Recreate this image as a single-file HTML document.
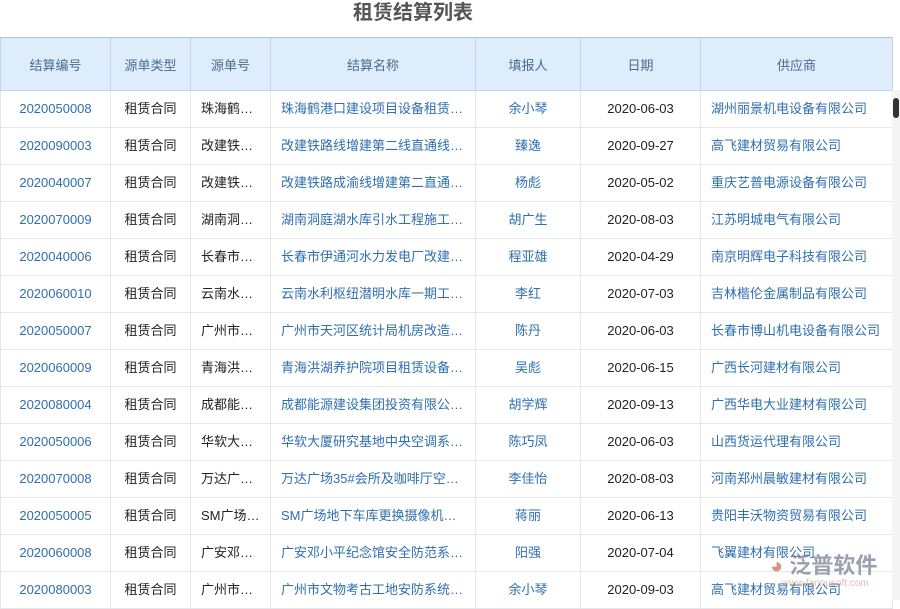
<!DOCTYPE html><html><head><meta charset="utf-8"><style>
body{margin:0;width:900px;height:600px;overflow:hidden;background:#fff;font-family:"Liberation Sans","Noto Sans CJK SC",sans-serif;position:relative}
h1{position:absolute;top:0;left:0;width:826px;margin:0;text-align:center;font-size:20px;line-height:26px;color:#555;font-weight:bold}
table{position:absolute;top:37px;left:0;border-collapse:collapse;table-layout:fixed;width:892px;font-size:13px}
th{background:#deedfb;color:#4a6c8c;font-weight:normal;height:52px;padding:0;border:1px solid #c4d6e6;border-top:1px solid #a9c4dc}
td{height:36px;padding:0;line-height:16px;border:1px solid #e4e8ec;text-align:center;color:#222;white-space:nowrap;overflow:hidden}
td.l{text-align:left;padding-left:10px}
.b{color:#2f6fae}
.sb{position:absolute;right:0;top:90px;width:8px;height:510px;background:#f4f4f4}
.sb div{width:6px;height:20px;margin:8px 1px;background:#333;border-radius:3px}
.logo{position:absolute;left:770px;top:548px;font-size:22px;font-weight:bold;color:rgba(120,130,150,.75)}
.url{position:absolute;left:782px;top:578px;font-size:10px;color:rgba(200,120,100,.5)}
</style></head><body>
<h1>租赁结算列表</h1>
<table>
<colgroup><col width="110"><col width="80"><col width="80"><col width="205"><col width="105"><col width="120"><col width="192"></colgroup>
<tr><th>结算编号</th><th>源单类型</th><th>源单号</th><th>结算名称</th><th>填报人</th><th>日期</th><th>供应商</th></tr>
<tr><td class="b">2020050008</td><td>租赁合同</td><td class="l">珠海鹤…</td><td class="l b">珠海鹤港口建设项目设备租赁…</td><td class="b">余小琴</td><td>2020-06-03</td><td class="l b">湖州丽景机电设备有限公司</td></tr>
<tr><td class="b">2020090003</td><td>租赁合同</td><td class="l">改建铁…</td><td class="l b">改建铁路线增建第二线直通线…</td><td class="b">臻逸</td><td>2020-09-27</td><td class="l b">高飞建材贸易有限公司</td></tr>
<tr><td class="b">2020040007</td><td>租赁合同</td><td class="l">改建铁…</td><td class="l b">改建铁路成渝线增建第二直通…</td><td class="b">杨彪</td><td>2020-05-02</td><td class="l b">重庆艺普电源设备有限公司</td></tr>
<tr><td class="b">2020070009</td><td>租赁合同</td><td class="l">湖南洞…</td><td class="l b">湖南洞庭湖水库引水工程施工…</td><td class="b">胡广生</td><td>2020-08-03</td><td class="l b">江苏明城电气有限公司</td></tr>
<tr><td class="b">2020040006</td><td>租赁合同</td><td class="l">长春市…</td><td class="l b">长春市伊通河水力发电厂改建…</td><td class="b">程亚雄</td><td>2020-04-29</td><td class="l b">南京明辉电子科技有限公司</td></tr>
<tr><td class="b">2020060010</td><td>租赁合同</td><td class="l">云南水…</td><td class="l b">云南水利枢纽潜明水库一期工…</td><td class="b">李红</td><td>2020-07-03</td><td class="l b">吉林楷伦金属制品有限公司</td></tr>
<tr><td class="b">2020050007</td><td>租赁合同</td><td class="l">广州市…</td><td class="l b">广州市天河区统计局机房改造…</td><td class="b">陈丹</td><td>2020-06-03</td><td class="l b">长春市博山机电设备有限公司</td></tr>
<tr><td class="b">2020060009</td><td>租赁合同</td><td class="l">青海洪…</td><td class="l b">青海洪湖养护院项目租赁设备…</td><td class="b">吴彪</td><td>2020-06-15</td><td class="l b">广西长河建材有限公司</td></tr>
<tr><td class="b">2020080004</td><td>租赁合同</td><td class="l">成都能…</td><td class="l b">成都能源建设集团投资有限公…</td><td class="b">胡学辉</td><td>2020-09-13</td><td class="l b">广西华电大业建材有限公司</td></tr>
<tr><td class="b">2020050006</td><td>租赁合同</td><td class="l">华软大…</td><td class="l b">华软大厦研究基地中央空调系…</td><td class="b">陈巧凤</td><td>2020-06-03</td><td class="l b">山西货运代理有限公司</td></tr>
<tr><td class="b">2020070008</td><td>租赁合同</td><td class="l">万达广…</td><td class="l b">万达广场35#会所及咖啡厅空…</td><td class="b">李佳怡</td><td>2020-08-03</td><td class="l b">河南郑州晨敏建材有限公司</td></tr>
<tr><td class="b">2020050005</td><td>租赁合同</td><td class="l">SM广场…</td><td class="l b">SM广场地下车库更换摄像机…</td><td class="b">蒋丽</td><td>2020-06-13</td><td class="l b">贵阳丰沃物资贸易有限公司</td></tr>
<tr><td class="b">2020060008</td><td>租赁合同</td><td class="l">广安邓…</td><td class="l b">广安邓小平纪念馆安全防范系…</td><td class="b">阳强</td><td>2020-07-04</td><td class="l b">飞翼建材有限公司</td></tr>
<tr><td class="b">2020080003</td><td>租赁合同</td><td class="l">广州市…</td><td class="l b">广州市文物考古工地安防系统…</td><td class="b">余小琴</td><td>2020-09-03</td><td class="l b">高飞建材贸易有限公司</td></tr>
</table>
<div class="sb"><div></div></div>
<div class="logo"><span style="color:rgba(210,120,90,.8)">◕</span> 泛普软件</div>
<div class="url">www.fanpusoft.com</div>
</body></html>
